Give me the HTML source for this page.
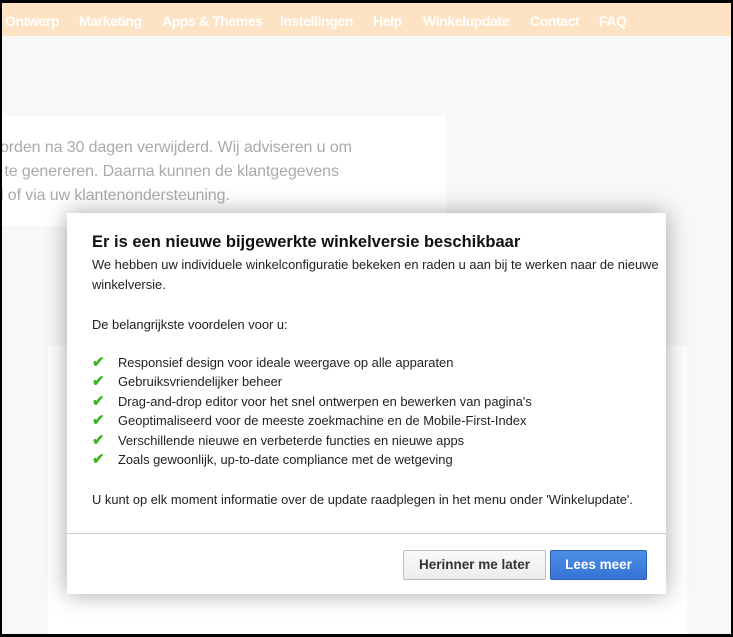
<!DOCTYPE html>
<html><head><meta charset="utf-8"><style>
*{margin:0;padding:0;box-sizing:border-box}
html,body{width:733px;height:637px;overflow:hidden;background:#000}
#f{position:absolute;left:2px;top:3px;width:729px;height:631px;background:#f8f8f8;overflow:hidden;font-family:"Liberation Sans",Arial,sans-serif}
#nav{position:absolute;left:0;top:0;width:729px;height:33px;background:#fde2c4}
#nav span{position:absolute;top:10px;color:#fff;font-size:14px;font-weight:bold;letter-spacing:-0.4px}
.card{position:absolute;background:#fff}
.bg{color:#aaa;font-size:16px;position:absolute;left:0;white-space:nowrap;letter-spacing:-0.1px}
#m{position:absolute;left:65px;top:210px;width:599px;height:381px;background:#fff;box-shadow:0 0 22px rgba(0,0,0,.35)}
#m h1{position:absolute;left:25px;top:20px;font-size:16.5px;font-weight:bold;color:#111}
.t{position:absolute;left:25px;font-size:12.9px;color:#222;white-space:nowrap}
.li{position:absolute;left:51px;font-size:12.9px;color:#222;white-space:nowrap}
.ck{position:absolute;left:25px;color:#3cb521;font-size:15px;font-weight:bold}
#hr{position:absolute;left:0;top:320px;width:599px;height:1px;background:#ccc}
.b{position:absolute;top:337px;height:30px;font-size:13.5px;font-weight:bold;text-align:center;line-height:28px;border-radius:2px}
</style></head><body><div id="f">
<div id="nav">
<span style="left:3px">Ontwerp</span><span style="left:77px">Marketing</span><span style="left:160px">Apps &amp; Themes</span><span style="left:278px">Instellingen</span><span style="left:371px">Help</span><span style="left:421px">Winkelupdate</span><span style="left:528px">Contact</span><span style="left:597px">FAQ</span>
</div>
<div class="card" style="left:0;top:113px;width:444px;height:110px">
<div class="bg" style="left:-2px;top:23px">orden na 30 dagen verwijderd. Wij adviseren u om</div>
<div class="bg" style="left:-2px;top:47px">&nbsp;te genereren. Daarna kunnen de klantgegevens</div>
<div class="bg" style="left:-2px;top:71px">l of via uw klantenondersteuning.</div>
</div>
<div class="card" style="left:46px;top:343px;width:639px;height:300px"></div>
<div id="m">
<h1>Er is een nieuwe bijgewerkte winkelversie beschikbaar</h1>
<div class="t" style="top:44px">We hebben uw individuele winkelconfiguratie bekeken en raden u aan bij te werken naar de nieuwe</div>
<div class="t" style="top:64px">winkelversie.</div>
<div class="t" style="top:104px">De belangrijkste voordelen voor u:</div>
<div class="ck" style="top:140px">✔</div><div class="li" style="top:142px">Responsief design voor ideale weergave op alle apparaten</div>
<div class="ck" style="top:159px">✔</div><div class="li" style="top:161px">Gebruiksvriendelijker beheer</div>
<div class="ck" style="top:179px">✔</div><div class="li" style="top:181px">Drag-and-drop editor voor het snel ontwerpen en bewerken van pagina's</div>
<div class="ck" style="top:198px">✔</div><div class="li" style="top:200px">Geoptimaliseerd voor de meeste zoekmachine en de Mobile-First-Index</div>
<div class="ck" style="top:218px">✔</div><div class="li" style="top:220px">Verschillende nieuwe en verbeterde functies en nieuwe apps</div>
<div class="ck" style="top:237px">✔</div><div class="li" style="top:239px">Zoals gewoonlijk, up-to-date compliance met de wetgeving</div>
<div class="t" style="top:279px">U kunt op elk moment informatie over de update raadplegen in het menu onder 'Winkelupdate'.</div>
<div id="hr"></div>
<div class="b" style="left:336px;width:143px;background:linear-gradient(#fafafa,#ececec);border:1px solid #bbb;color:#333">Herinner me later</div>
<div class="b" style="left:483px;width:97px;background:linear-gradient(#4d8fe6,#3572d6);border:1px solid #2f62b5;color:#fff">Lees meer</div>
</div>
</div></body></html>
